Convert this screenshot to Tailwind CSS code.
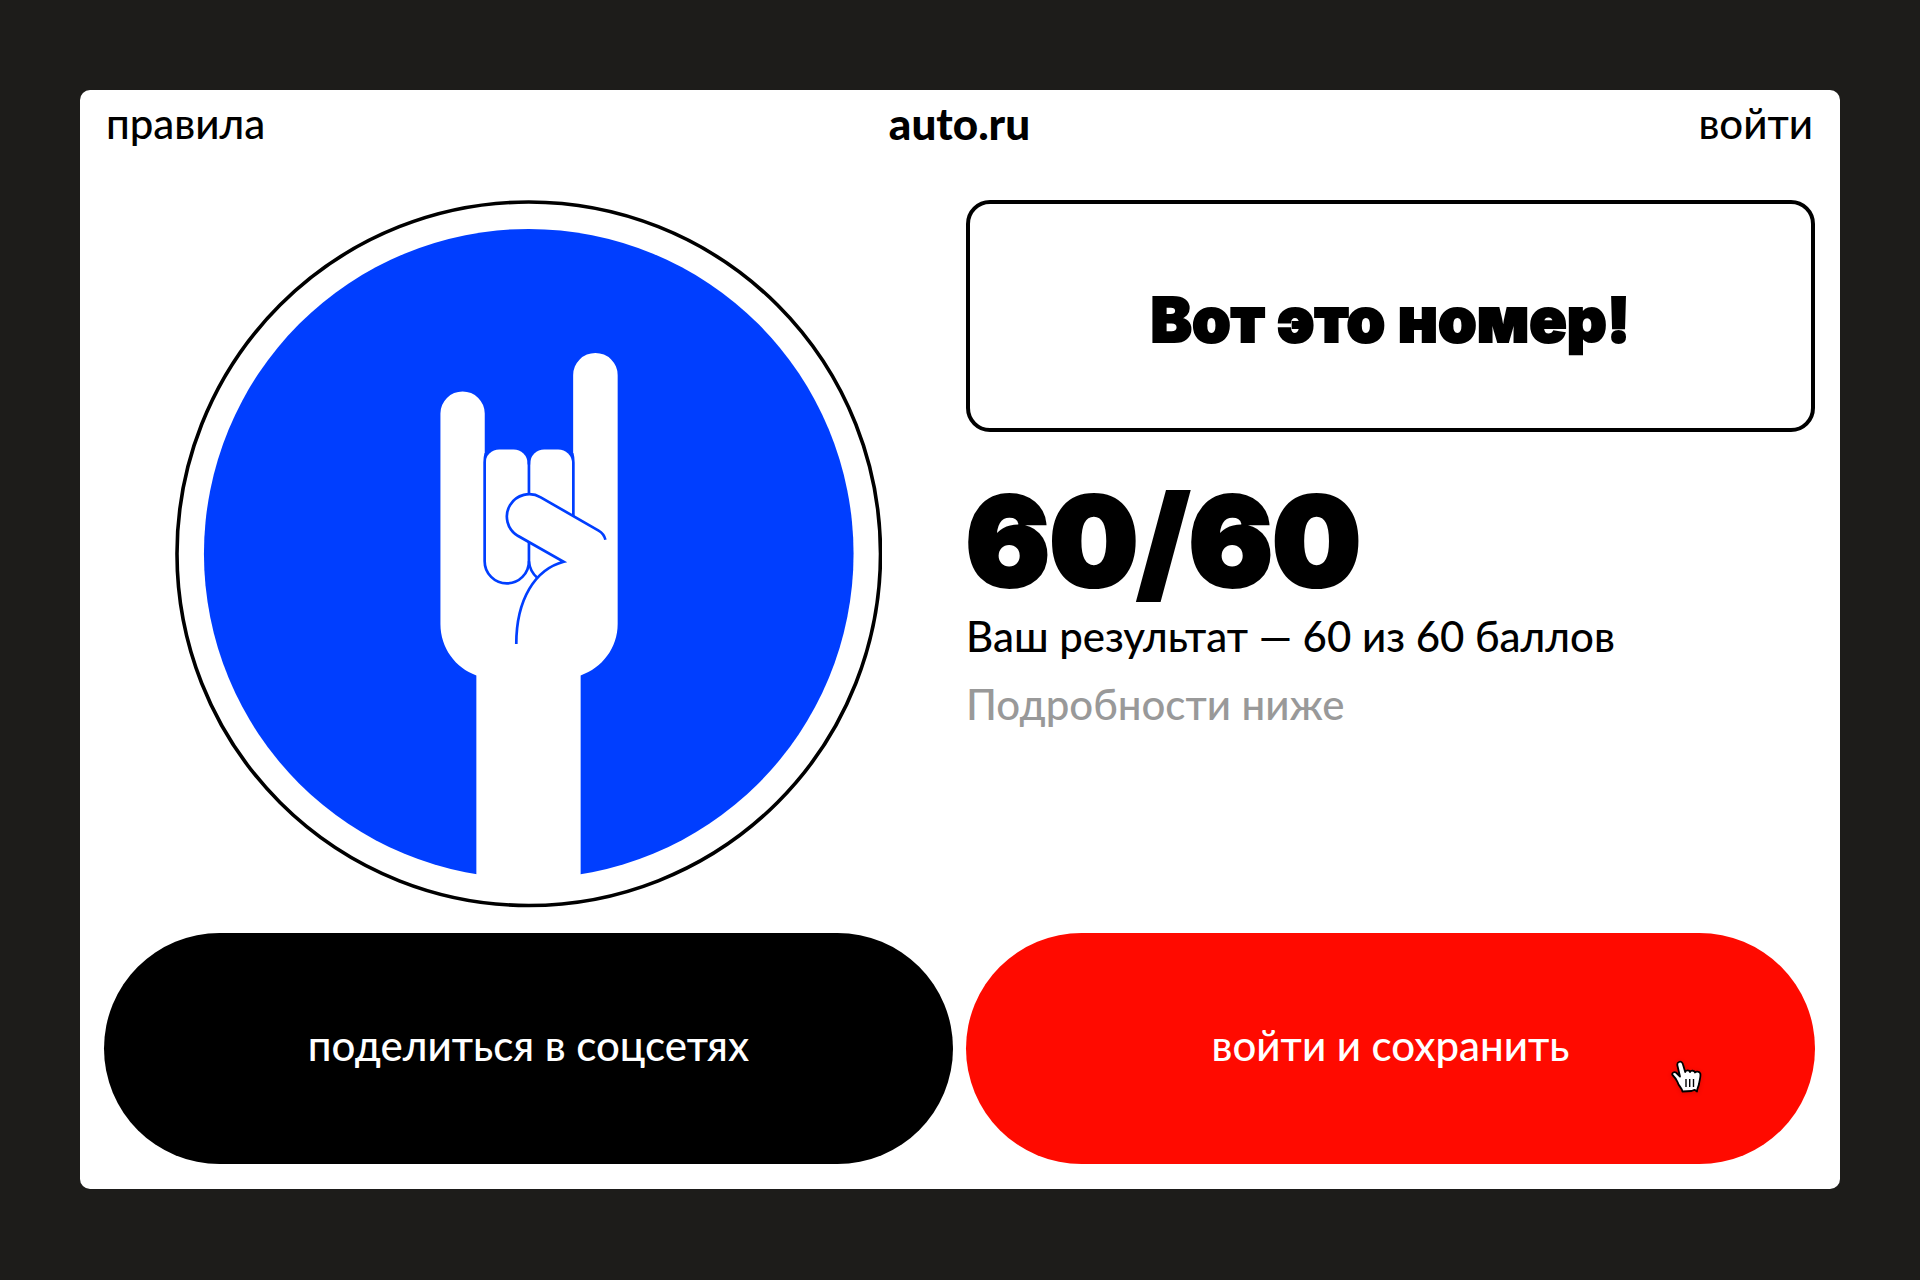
<!DOCTYPE html>
<html lang="ru">
<head>
<meta charset="utf-8">
<meta name="viewport" content="width=device-width, initial-scale=1">
<title>auto.ru</title>
<script src="https://cdn.jsdelivr.net/npm/@tailwindcss/browser@4"></script>
</head>
<body class="min-h-screen bg-[#1d1c1a] px-20 py-[90px] font-[Lato,sans-serif] text-[42px] leading-[48px] font-medium text-black">
<div class="rounded-[10px] bg-white pr-[25px] pb-[25px] pl-6">
  <header class="grid grid-cols-3 px-0.5 pt-[9px] pb-[53px]">
    <a href="#rules" class="justify-self-start">правила</a>
    <a href="#home" class="justify-self-center text-[44px] font-black">auto.ru</a>
    <a href="#login" class="justify-self-end">войти</a>
  </header>

  <main class="grid grid-cols-2 gap-x-[13px] gap-y-[25px]">
    <svg viewBox="174 200 709 709" class="aspect-square w-5/6 justify-self-center" role="img" aria-label="Рука с жестом «коза»">
      <circle cx="528.5" cy="554.5" r="352.5" fill="#fff" stroke="#000" stroke-width="3.6"/>
      <circle cx="528.5" cy="554.5" r="325.5" fill="#003eff"/>
      <!-- ладонь и рука -->
      <g fill="#fff">
        <path d="M440 414a22.2 22.2 0 0 1 44.4 0V465H573V375.500a22.300 22.300 0 0 1 44.600 0V625C617.600 649 602 669 580.500 676.500V885H476V676.500C455 669 440 649 440 625Z"/>
        <rect x="485" y="450" width="42.300" height="60" rx="14"/>
        <rect x="530" y="450" width="42" height="60" rx="14"/>
      </g>
      <!-- контуры пальцев -->
      <g fill="none" stroke="#003eff" stroke-width="2.700">
        <path d="M485.500 454Q484.300 458 484.300 463V562a22.200 22.200 0 0 0 44.400 0V460"/>
        <path d="M572 454Q573.200 458 573.200 463V530"/>
        <path d="M528.700 562Q529.500 572 537 578.500"/>
        <path fill="#fff" d="M605.300 540.500Q604 534.500 598.500 531.300L540.500 498A22.200 22.200 0 1 0 517.500 536.500L563.500 562.500C535 570 516 600 516 645"/>
      </g>
    </svg>

    <section>
      <div class="flex h-[232px] items-center justify-center rounded-3xl border-4 border-black pt-2">
        <h1 class="font-[Inter,sans-serif] text-[62px] leading-[72px] font-black [-webkit-text-stroke:2px_black]">Вот это номер!</h1>
      </div>
      <p class="mt-12 font-[Inter,sans-serif] text-[124px] leading-[122px] font-black [-webkit-text-stroke:4px_black]">60/60</p>
      <p class="leading-[68px]">Ваш результат — 60 из 60 баллов</p>
      <p class="leading-[68px] text-[#999]">Подробности ниже</p>
    </section>

    <button type="button" class="h-[231px] rounded-full bg-black pb-1.5 text-white">поделиться в соцсетях</button>
    <button type="button" class="relative h-[231px] rounded-full bg-[#ff0a00] pb-1.5 text-white">войти и сохранить
      <svg viewBox="0 0 32 36" class="absolute top-[127px] right-[112px] h-9 w-8 drop-shadow-sm" aria-hidden="true">
        <path d="M8 2C10 1 11.500 2.500 12 4.500L14.200 12C14.500 10 18.500 9.500 19 12C20 10 23.500 10.500 24 12.500C25 11 28.500 11.500 29.300 13.500C30 17 28.500 20 28 24C27.500 27 26 28 26 31.500L23.500 29.800L20.500 31L11.500 31.500C11 28 7.500 26 6.500 22C5.500 19 3.500 17 1.500 15C.500 13 3 11.500 5 12.500L9 16.500L6.500 6C6 4 6.500 2.500 8 2Z" fill="#fff" stroke="#000" stroke-width="1.800" stroke-linejoin="round"/>
        <path d="M15 19v8M18.700 19v8M22.500 19v8" stroke="#000" stroke-width="1.400"/>
      </svg>
    </button>
  </main>
</div>
</body>
</html>
